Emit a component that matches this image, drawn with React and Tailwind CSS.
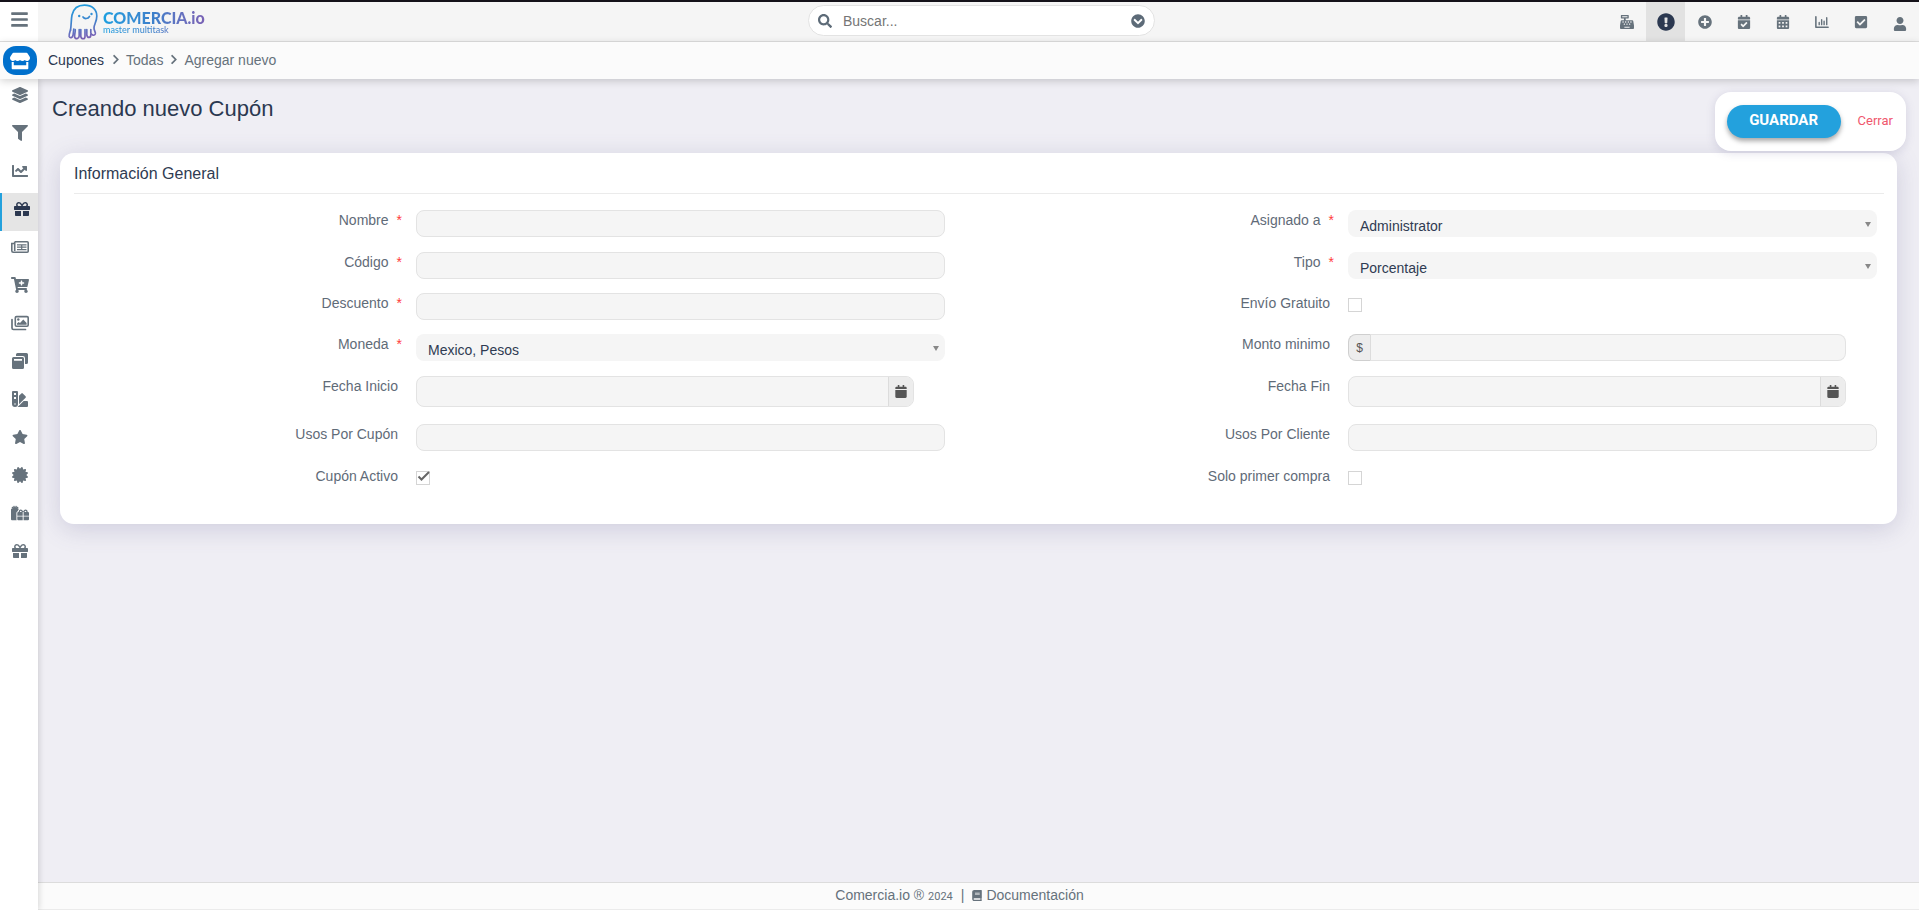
import { useState } from 'react';
import {
  FaBars,
  FaBook,
  FaCalendar,
  FaCalendarAlt,
  FaCalendarCheck,
  FaCartPlus,
  FaCashRegister,
  FaCertificate,
  FaChartLine,
  FaCheckSquare,
  FaChevronCircleDown,
  FaChevronRight,
  FaExclamationCircle,
  FaFilter,
  FaGift,
  FaGifts,
  FaLayerGroup,
  FaPlusCircle,
  FaSearch,
  FaStar,
  FaStore,
  FaSwatchbook,
  FaUser,
} from 'react-icons/fa';

const BarsIcon = ({ className }) => (
  <svg viewBox="0 0 16 16" className={className} fill="none" stroke="currentColor" strokeLinecap="round">
    <path d="M1 2v12h14" strokeWidth="1.8" strokeLinejoin="round" />
    <path d="M4.8 8.5v2.5M7.6 5.5V11M10.4 7v4M13.4 3v8" strokeWidth="1.6" />
  </svg>
);

const CollectionIcon = ({ className }) => (
  <svg viewBox="0 0 16 16" className={className} fill="currentColor">
    <path d="M5.5 0h9A1.5 1.5 0 0 1 16 1.5v8a1.5 1.5 0 0 1-1.5 1.5H13V5.2A2.2 2.2 0 0 0 10.8 3H4V1.5A1.5 1.5 0 0 1 5.5 0z" />
    <path
      fillRule="evenodd"
      d="M1.5 4h9A1.5 1.5 0 0 1 12 5.5v9a1.5 1.5 0 0 1-1.5 1.5h-9A1.5 1.5 0 0 1 0 14.5v-9A1.5 1.5 0 0 1 1.5 4zM2 6v1.7h8V6z"
    />
  </svg>
);

const NewspaperIcon = ({ className }) => (
  <svg viewBox="0 0 18 16" className={className} fill="none" stroke="currentColor">
    <path d="M4 2.8h12.2a1 1 0 0 1 1 1v8.4a1 1 0 0 1-1 1H2.200a1.400 1.400 0 0 1-1.400-1.400V4.500H3" strokeWidth="1.600" />
    <path d="M3.700 2.500v9.500" strokeWidth="1.600" />
    <path d="M6 5.800h9.500M6 8.200h9.500M6 10.600h9.500M10.700 5.500v5.500" strokeWidth="1.200" />
  </svg>
);

const GalleryIcon = ({ className }) => (
  <svg viewBox="0 0 18 16" className={className} fill="none" stroke="currentColor" strokeLinejoin="round">
    <path d="M1 4.500v8.500a1.500 1.500 0 0 0 1.500 1.500h12" strokeWidth="1.700" strokeLinecap="round" />
    <rect x="4.300" y="1.600" width="12.900" height="9.600" rx="1.200" strokeWidth="1.600" />
    <circle cx="7.300" cy="4.500" r="1.200" fill="currentColor" stroke="none" />
    <path d="M6 9.800V8.500l1.700-1.600 1.300 1.200 3.300-3.600L15.600 8v1.800z" fill="currentColor" stroke="none" />
  </svg>
);

const GhostLogo = () => (
  <svg viewBox="0 0 30 36" className="h-9 w-[30px]" fill="none" stroke="url(#ghost)" strokeWidth="1.7" strokeLinecap="round" strokeLinejoin="round">
    <defs>
      <linearGradient id="ghost" gradientUnits="userSpaceOnUse" x1="0" y1="0" x2="6" y2="36">
        <stop offset="0" stopColor="#1b9fe0" />
        <stop offset="0.5" stopColor="#3c86cf" />
        <stop offset="1" stopColor="#7d62b5" />
      </linearGradient>
    </defs>
    <path d="M2.5 26C3.5 20 3 16 4 11C5.5 4.5 10 1.2 16.5 1.2C24 1.2 28.8 5.5 28.8 12C28.8 18 26 20 26 24C26 27 28 28 27.300 30C26.500 32 23.500 31.500 22.800 29V25.500" />
    <path d="M2.5 26C1.6 29 .8 30.5 1.2 32.5C2 34.5 4.5 33.8 5 31.5L5.8 25" />
    <path d="M7.2 25.5C7.5 29 6 31 6.8 33.5C8 35.5 11 34.5 11.2 32V25.5" />
    <path d="M12.8 25.5V32.5C13.5 35.5 17 35.5 17 32.5V25.5" />
    <path d="M18.8 25.5V31C19.5 34.5 23 34 22.8 30.5" />
    <path d="M15 13C16.500 15.200 20 15 21.500 12.500" />
    <circle cx="11.200" cy="12" r="1.200" fill="#3191d6" stroke="none" />
    <circle cx="23.500" cy="10" r="1.200" fill="#3191d6" stroke="none" />
  </svg>
);

const topLinks = [
  { label: 'Punto de venta', icon: FaCashRegister },
  { label: 'Avisos', icon: FaExclamationCircle, active: true },
  { label: 'Agregar', icon: FaPlusCircle },
  { label: 'Citas', icon: FaCalendarCheck },
  { label: 'Calendario', icon: FaCalendarAlt },
  { label: 'Reportes', icon: BarsIcon },
  { label: 'Tareas', icon: FaCheckSquare },
  { label: 'Usuario', icon: FaUser, low: true },
];

const sideLinks = [
  { label: 'Categorías', icon: FaLayerGroup },
  { label: 'Filtros', icon: FaFilter },
  { label: 'Ventas', icon: FaChartLine },
  { label: 'Cupones', icon: FaGift, active: true },
  { label: 'Noticias', icon: NewspaperIcon, wide: true },
  { label: 'Carritos', icon: FaCartPlus, wide: true },
  { label: 'Imágenes', icon: GalleryIcon, wide: true },
  { label: 'Colecciones', icon: CollectionIcon },
  { label: 'Muestras', icon: FaSwatchbook },
  { label: 'Destacados', icon: FaStar },
  { label: 'Marcas', icon: FaCertificate },
  { label: 'Paquetes', icon: FaGifts, wide: true },
  { label: 'Regalos', icon: FaGift },
];

const inputClass = 'block w-full rounded-lg border border-[#e3e3e3] bg-[#f5f5f5] px-2 text-sm text-[#2f3b52] outline-none';

const Row = ({ id, label, required, className, children }) => (
  <div className={`grid grid-cols-[342fr_529fr] items-start ${className}`}>
    <label htmlFor={id} className="flex justify-end pr-[18px] text-sm leading-5 text-[#5f6b78]">
      {label}
      {required && <span className="-mr-1 ml-2 text-sm leading-5 text-[#ff3b3b]">*</span>}
    </label>
    <div className="min-w-0">{children}</div>
  </div>
);

const TextInput = ({ id }) => <input id={id} type="text" className={`${inputClass} h-[27px]`} />;

const Select = ({ id, options }) => (
  <div className="relative">
    <select id={id} className="block h-[27px] w-full appearance-none rounded-lg bg-[#f5f5f5] pt-[5px] pr-6 pl-3 text-sm leading-5 text-[#2f3b52] outline-none">
      {options.map((option) => (
        <option key={option}>{option}</option>
      ))}
    </select>
    <svg viewBox="0 0 6 5" className="pointer-events-none absolute top-3 right-1.5 h-[5px] w-1.5" fill="#888">
      <path d="M0 0h6L3 5z" />
    </svg>
  </div>
);

const DateInput = ({ id }) => (
  <div className="mr-[31px] flex h-[31px] overflow-hidden rounded-lg border border-[#e3e3e3] bg-[#f5f5f5]">
    <input id={id} type="text" className="min-w-0 flex-1 px-2 text-sm text-[#2f3b52] outline-none" />
    <button type="button" aria-label="Abrir calendario" className="flex w-[25px] items-center justify-center border-l border-[#dcdcdc] bg-[#ededed] text-[#555]">
      <FaCalendar className="h-[13px] w-3" />
    </button>
  </div>
);

const AmountInput = ({ id }) => (
  <div className="mr-[31px] flex h-[27px]">
    <span className="flex w-[23px] items-center justify-center rounded-l-lg border border-[#cfcfcf] border-r-[#dcdcdc] bg-[#ededed] text-xs text-[#555]">$</span>
    <input id={id} type="text" className="min-w-0 flex-1 rounded-r-lg border border-l-0 border-[#e3e3e3] bg-[#f5f5f5] px-2 text-sm text-[#2f3b52] outline-none" />
  </div>
);

const Checkbox = ({ id, defaultChecked = false }) => {
  const [checked, setChecked] = useState(defaultChecked);

  return (
    <div className="relative mt-[5px] h-3.5 w-3.5">
      <input
        id={id}
        type="checkbox"
        checked={checked}
        onChange={(e) => setChecked(e.target.checked)}
        className="block h-3.5 w-3.5 appearance-none border border-[#d5d5d5] bg-white"
      />
      {checked && (
        <svg viewBox="0 0 14 14" className="pointer-events-none absolute inset-0" fill="none" stroke="#666" strokeWidth="2">
          <path d="M2.5 5.5L5.5 8.5L13 1" />
        </svg>
      )}
    </div>
  );
};

const Header = () => (
  <header className="flex h-[42px] border-t-2 border-b border-t-[#15121a] border-b-[#dfdfdf] bg-[#f5f5f5]">
    <button type="button" aria-label="Menú" className="flex w-[38px] items-center justify-center bg-white pb-1 text-[#66727c]">
      <FaBars className="h-[19px] w-[17px]" />
    </button>
    <div className="grid flex-1 grid-cols-[770fr_347px_764fr] items-center">
      <a href="#inicio" className="flex items-center pl-[30px]">
        <GhostLogo />
        <span className="ml-[5px] flex flex-col bg-linear-to-r from-[#1b9fe0] via-[#3d7fca] to-[#7a62b5] bg-clip-text font-[Lato,sans-serif] text-transparent">
          <span className="text-base leading-[17px] font-black">COMERCIA.io</span>
          <span className="text-[9px] leading-2 font-medium">master multitask</span>
        </span>
      </a>
      <div className="mb-0.5 flex h-[31px] items-center rounded-full border border-[#e3e3e3] bg-white px-[9px] text-[#5d6b78]">
        <FaSearch className="h-3.5 w-3.5" />
        <input type="text" aria-label="Buscar" placeholder="Buscar..." className="ml-[11px] min-w-0 flex-1 text-sm outline-none placeholder:text-[#757575]" />
        <button type="button" aria-label="Opciones de búsqueda">
          <FaChevronCircleDown className="h-3.5 w-3.5" />
        </button>
      </div>
      <nav className="flex h-full justify-end">
        {topLinks.map(({ label, icon: Icon, active, low }) => (
          <a
            key={label}
            href="#menu"
            aria-label={label}
            className={`flex w-[39px] items-center justify-center ${active ? 'bg-[#e2e2e2] text-[#2b3850]' : 'text-[#66727c]'} ${low ? 'pt-1' : ''}`}
          >
            <Icon className={active ? 'h-[18px] w-[18px]' : 'h-3.5 w-3.5'} />
          </a>
        ))}
      </nav>
    </div>
  </header>
);

const Breadcrumb = () => (
  <div className="relative z-20 flex h-[37px] items-center bg-[#fbfbfb] pl-[3px] text-sm shadow-[0_2px_8px_rgba(0,0,0,0.18)]">
    <a href="#tienda" aria-label="Tienda" className="flex h-[29px] w-[34px] items-center justify-center rounded-[13px] bg-[#0070cc] text-white">
      <FaStore className="h-[18px] w-5" />
    </a>
    <div className="ml-[11px] flex items-center pb-0.5 text-[#66727c]">
      <a href="#cupones" className="text-[#2b3850]">
        Cupones
      </a>
      <FaChevronRight className="mr-1.5 ml-2 h-[11px] w-2" />
      <a href="#todas">Todas</a>
      <FaChevronRight className="mr-1.5 ml-[7px] h-[11px] w-2" />
      <span>Agregar nuevo</span>
    </div>
  </div>
);

const Sidebar = () => (
  <nav className="relative z-10 w-[38px] shrink-0 bg-white shadow-[1px_0_6px_rgba(0,0,0,0.15)]">
    {sideLinks.map(({ label, icon: Icon, active, wide }) => (
      <a
        key={label}
        href="#seccion"
        aria-label={label}
        className={`flex h-[38px] items-center justify-center pb-[7px] ${
          active ? 'border-l-2 border-[#23a1dd] bg-[#e5e5e5] pl-1 text-[#2b3850]' : 'pl-0.5 text-[#66727c]'
        }`}
      >
        <Icon className={wide ? 'h-4 w-[18px]' : 'h-4 w-4'} />
      </a>
    ))}
  </nav>
);

const CouponForm = () => (
  <section className="mx-[22px] rounded-[14px] bg-white pr-3 pb-4 pl-3.5 shadow-[0_5px_24px_rgba(90,85,140,0.22)]">
    <h2 className="mr-px flex h-[41px] items-center border-b border-[#ebebeb] pt-0.5 text-base text-[#2f3b52]">Información General</h2>
    <div className="grid grid-cols-2 gap-x-[61px] pt-4 pr-2">
      <div>
        <Row id="nombre" label="Nombre" required className="h-[42px]">
          <TextInput id="nombre" />
        </Row>
        <Row id="codigo" label="Código" required className="h-[41px]">
          <TextInput id="codigo" />
        </Row>
        <Row id="descuento" label="Descuento" required className="h-[41px]">
          <TextInput id="descuento" />
        </Row>
        <Row id="moneda" label="Moneda" required className="h-[42px]">
          <Select id="moneda" options={['Mexico, Pesos']} />
        </Row>
        <Row id="inicio" label="Fecha Inicio" className="h-12">
          <DateInput id="inicio" />
        </Row>
        <Row id="usos-cupon" label="Usos Por Cupón" className="h-[42px]">
          <TextInput id="usos-cupon" />
        </Row>
        <Row id="activo" label="Cupón Activo" className="h-[42px]">
          <Checkbox id="activo" defaultChecked />
        </Row>
      </div>
      <div>
        <Row id="asignado" label="Asignado a" required className="h-[42px]">
          <Select id="asignado" options={['Administrator']} />
        </Row>
        <Row id="tipo" label="Tipo" required className="h-[41px]">
          <Select id="tipo" options={['Porcentaje']} />
        </Row>
        <Row id="envio" label="Envío Gratuito" className="h-[41px]">
          <Checkbox id="envio" />
        </Row>
        <Row id="monto" label="Monto minimo" className="h-[42px]">
          <AmountInput id="monto" />
        </Row>
        <Row id="fin" label="Fecha Fin" className="h-12">
          <DateInput id="fin" />
        </Row>
        <Row id="usos-cliente" label="Usos Por Cliente" className="h-[42px]">
          <TextInput id="usos-cliente" />
        </Row>
        <Row id="primer-compra" label="Solo primer compra" className="h-[42px]">
          <Checkbox id="primer-compra" />
        </Row>
      </div>
    </div>
  </section>
);

export default function App() {
  return (
    <div className="flex min-h-screen flex-col bg-[#efeef4] font-['Liberation_Sans',Arial,sans-serif]">
      <Header />
      <Breadcrumb />
      <div className="flex flex-1">
        <Sidebar />
        <div className="flex min-w-0 flex-1 flex-col">
          <main className="flex-1">
            <div className="flex items-start justify-between pr-[13px] pl-3.5">
              <h1 className="mt-[15px] text-[22px] leading-[30px] text-[#2b3850]">Creando nuevo Cupón</h1>
              <div className="relative z-10 mt-[13px] mb-0.5 flex h-[59px] items-center rounded-2xl bg-white pr-[13px] pl-3 font-[Roboto,sans-serif] shadow-[0_2px_10px_rgba(90,85,140,0.18)]">
                <button type="button" className="h-[33px] w-[114px] rounded-full bg-[#23a1dd] pb-0.5 text-[15px] font-bold text-white shadow-[0_3px_5px_rgba(0,0,0,0.35)]">
                  GUARDAR
                </button>
                <a href="#cerrar" className="ml-[17px] pb-0.5 text-[13px] text-[#f0576d]">
                  Cerrar
                </a>
              </div>
            </div>
            <CouponForm />
          </main>
          <footer className="flex h-7 items-center justify-center border-t border-b border-t-[#dcdcdc] border-b-[#ebebeb] bg-[#fbfbfb] pr-[38px] pb-0.5 text-sm text-[#66727c]">
            <span>
              Comercia.io ® <span className="font-[Roboto,sans-serif] text-[11px]">2024</span>
            </span>
            <span className="mx-2">|</span>
            <a href="#documentacion" className="flex items-center gap-1">
              <FaBook className="h-[11px] w-2.5" />
              Documentación
            </a>
          </footer>
        </div>
      </div>
    </div>
  );
}
